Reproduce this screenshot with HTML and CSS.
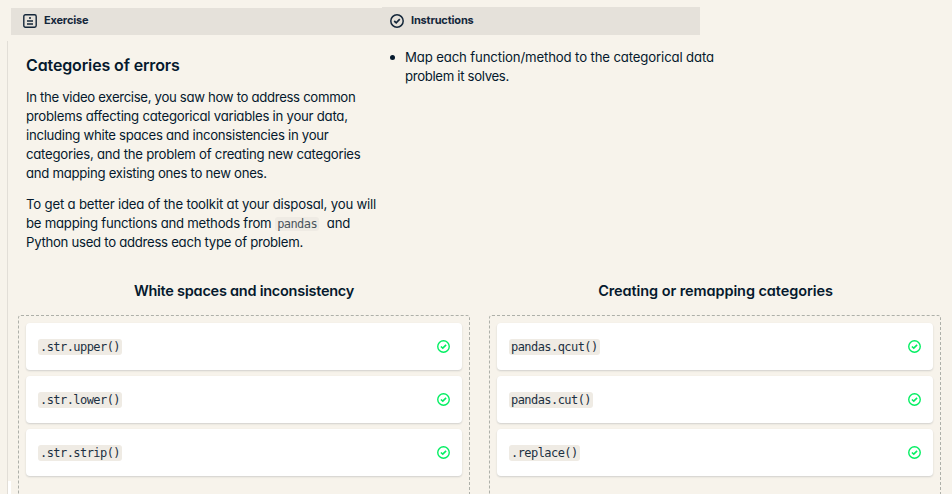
FILE: index.html
```html
<!DOCTYPE html>
<html lang="en">
<head>
<meta charset="utf-8">
<title>Categories of errors</title>
<link rel="stylesheet" href="styles.css">
</head>
<body>
<svg class="defs" width="0" height="0">
  <symbol id="check" viewBox="0 0 14 14"><circle cx="7" cy="7" r="6.2" fill="none" stroke="currentColor" stroke-width="1.5"/><path d="M4.2 7 6.2 8.8 9.8 5.2" fill="none" stroke="currentColor" stroke-width="1.7"/></symbol>
</svg>
<header class="tabs">
  <div class="tab exercise">
    <svg class="icon" width="14" height="14" viewBox="0 0 14 14"><rect x=".8" y=".8" width="12.4" height="12.4" rx="1.6" fill="none" stroke="currentColor" stroke-width="1.4"/><path d="M6 4h2M4 7h6M4 10h6" stroke="currentColor" stroke-width="1.4"/></svg>
    <span>Exercise</span>
  </div>
  <div class="tab instructions">
    <svg class="icon" width="14" height="14"><use href="#check"/></svg>
    <span>Instructions</span>
  </div>
</header>
<main class="panel">
  <div class="intro">
    <article class="description">
      <h1>Categories of errors</h1>
      <p><span class="tight">In the video exercise, you saw how to address common</span><br><span class="snug">problems affecting categorical variables in your data,</span><br><span class="even">including white spaces and inconsistencies in your</span><br><span class="snug">categories, and the problem of creating new categories</span><br><span class="even">and mapping existing ones to new ones.</span></p>
      <p><span class="loose">To get a better idea of the toolkit at your disposal, you will</span><br><span class="snug">be mapping functions and methods from</span> <code class="inline">pandas</code> <span class="loose">and</span><br><span class="even">Python used to address each type of problem.</span></p>
    </article>
    <ul class="steps">
      <li><span class="wide">Map each function/method to the categorical data</span><br><span class="tight">problem it solves.</span></li>
    </ul>
  </div>
  <div class="zones">
    <section class="zone">
      <h2>White spaces and inconsistency</h2>
      <div class="drop">
        <div class="card"><code>.str.upper()</code><svg class="ok" width="13" height="13"><use href="#check"/></svg></div>
        <div class="card"><code>.str.lower()</code><svg class="ok" width="13" height="13"><use href="#check"/></svg></div>
        <div class="card"><code>.str.strip()</code><svg class="ok" width="13" height="13"><use href="#check"/></svg></div>
      </div>
    </section>
    <section class="zone">
      <h2 class="remap">Creating or remapping categories</h2>
      <div class="drop">
        <div class="card"><code>pandas.qcut()</code><svg class="ok" width="13" height="13"><use href="#check"/></svg></div>
        <div class="card"><code>pandas.cut()</code><svg class="ok" width="13" height="13"><use href="#check"/></svg></div>
        <div class="card"><code>.replace()</code><svg class="ok" width="13" height="13"><use href="#check"/></svg></div>
      </div>
    </section>
  </div>
  <div class="corner"></div>
</main>
</body>
</html>
```
FILE: styles.css
```css
* { box-sizing: border-box; }
body {
  margin: 0;
  height: 494px;
  overflow: hidden;
  background: #f7f3eb;
  color: #05192d;
  font: 13.2px/19px Inter, "Liberation Sans", sans-serif;
  font-feature-settings: "cv11";
  white-space: nowrap;
}
.defs { position: absolute; }
h1, h2, p, ul { margin: 0; }
.tight { letter-spacing: -.33px; }
.even { letter-spacing: -.29px; }
.snug { letter-spacing: -.25px; }
.loose { letter-spacing: -.19px; }
.wide { letter-spacing: -.14px; }
.tabs { display: flex; align-items: flex-end; height: 35px; padding-left: 11px; }
.tab {
  display: flex;
  align-items: center;
  background: #e5e1da;
  font-size: 11px;
  font-weight: 700;
  letter-spacing: -.18px;
  color: #14273a;
}
.tab span { line-height: 14px; margin-bottom: 2px; }
.exercise { width: 371px; height: 27px; padding-left: 12px; gap: 7px; }
.exercise span { margin-bottom: 3px; }
.instructions { width: 318px; height: 28px; padding-left: 8px; gap: 7px; }
.icon { display: block; margin-top: -1px; }
.panel {
  position: relative;
  height: 453px;
  margin: 6px 0 0 7px;
  border-left: 1px solid #e2ded7;
}
.intro { display: flex; height: 240px; }
.description { width: 374px; padding: 13px 0 0 18px; }
h1 { font-size: 16px; line-height: 22px; font-weight: 600; letter-spacing: -.13px; }
.description p { margin-top: 12px; }
.steps { padding: 7px 0 0 23px; list-style: none; }
.steps li { position: relative; }
.steps li::before {
  content: "";
  position: absolute;
  left: -15px;
  top: 7px;
  width: 5px;
  height: 5px;
  border-radius: 50%;
  background: #05192d;
}
.zones { display: flex; gap: 19px; padding-left: 10px; }
.zone { width: 452px; }
h2 {
  height: 34px;
  font-size: 14.5px;
  line-height: 20px;
  font-weight: 600;
  letter-spacing: -.25px;
  text-align: center;
}
.remap { padding-left: 1px; letter-spacing: -.08px; }
.drop {
  display: flex;
  flex-direction: column;
  gap: 6px;
  height: 179px;
  padding: 7px 7px 0;
  border: 1px dashed #aeb0a9;
  border-bottom: 0;
  border-radius: 3px 3px 0 0;
}
.card {
  display: flex;
  flex: none;
  align-items: center;
  justify-content: space-between;
  height: 47px;
  padding: 0 12px;
  border-radius: 4px;
  background: #fff;
  box-shadow: 0 1px 2px rgba(5, 25, 45, .16);
}
code {
  padding: 0 2px;
  border-radius: 3px;
  background: #efebe4;
  color: #1c3042;
  font: 12px/16px "DejaVu Sans Mono", monospace;
  letter-spacing: -.56px;
}
.inline { margin: 0 4px 0 0; color: #4b555d; }
.ok { color: #03ef62; }
.corner { position: absolute; left: 0; top: 440px; width: 3px; height: 13px; background: #fff; }
```
